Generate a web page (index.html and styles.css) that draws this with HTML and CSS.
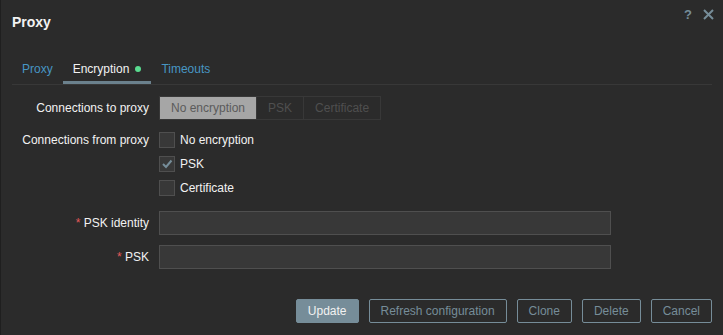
FILE: index.html
```html
<!doctype html>
<html>
  <head>
    <link rel="stylesheet" href="styles.css">
    <title>Proxy</title>
  </head>
  <body>
    <div id="dialog">
      <div class="dialog-header">
        <h4>Proxy</h4>
        <div class="header-controls">
          <span class="help-btn">?</span>
          <svg class="close-btn" width="11" height="11" viewBox="0 0 11 11">
            <path d="M1 1 L10 10 M10 1 L1 10" stroke="#768d99" stroke-width="2"/>
          </svg>
        </div>
      </div>
      <ul class="tabs">
        <li class="tab"><a>Proxy</a></li>
        <li class="tab active"><a>Encryption</a><span class="status-dot"></span></li>
        <li class="tab"><a>Timeouts</a></li>
      </ul>
      <div class="dialog-body">
        <div class="form-row row-to">
          <label class="label">Connections to proxy</label>
          <div class="radio-list">
            <span class="segment selected">No encryption</span>
            <span class="segment">PSK</span>
            <span class="segment">Certificate</span>
          </div>
        </div>
        <div class="form-row row-from">
          <label class="label">Connections from proxy</label>
          <ul class="checkbox-list">
            <li class="checkbox-item"><span class="checkbox"></span>No encryption</li>
            <li class="checkbox-item">
              <span class="checkbox">
                <svg width="14" height="14" viewBox="0 0 14 14"><path d="M3 7 L6 10 L11.5 3.5" stroke="#768d99" stroke-width="2" fill="none"/></svg>
              </span>PSK
            </li>
            <li class="checkbox-item"><span class="checkbox"></span>Certificate</li>
          </ul>
        </div>
        <div class="form-row row-identity">
          <label class="label"><span class="required">*</span> PSK identity</label>
          <input type="text" class="text-input">
        </div>
        <div class="form-row">
          <label class="label"><span class="required">*</span> PSK</label>
          <input type="text" class="text-input">
        </div>
      </div>
      <div class="dialog-footer">
        <button class="btn primary">Update</button>
        <button class="btn">Refresh configuration</button>
        <button class="btn">Clone</button>
        <button class="btn">Delete</button>
        <button class="btn">Cancel</button>
      </div>
    </div>
  </body>
</html>
```
FILE: styles.css
```css
body {
  margin: 0;
  font-family: "Liberation Sans", Arial, sans-serif;
  font-size: 12px;
  color: #f2f2f2;
  background: #1f1f1f;
}

#dialog {
  box-sizing: border-box;
  width: 723px;
  height: 335px;
  border-left: 1px solid #1f1f1f;
  background: #2b2b2b;
  display: flex;
  flex-direction: column;
}

.dialog-header {
  height: 56px;
  box-sizing: border-box;
  padding: 14px 9px 0 11px;
  display: flex;
  justify-content: space-between;
  align-items: flex-start;
}

h4 {
  margin: 0;
  font-size: 14px;
  line-height: 16px;
  font-weight: bold;
}

.header-controls {
  display: flex;
  align-items: center;
  gap: 11px;
  margin-top: -7px;
}

.help-btn {
  color: #768d99;
  font-weight: bold;
  font-size: 13px;
}

.tabs {
  list-style: none;
  margin: 0 11px;
  padding: 0;
  display: flex;
  border-bottom: 1px solid #383838;
}

.tab {
  padding: 6px 10px 5px;
  line-height: 14px;
  border-bottom: 3px solid transparent;
  display: flex;
  align-items: center;
}

.tab a {
  color: #4796c4;
}

.tab.active {
  border-bottom-color: #6b818d;
}

.tab.active a {
  color: #f2f2f2;
}

.status-dot {
  width: 6px;
  height: 6px;
  border-radius: 50%;
  background: #59db8f;
  margin-left: 6px;
}

.dialog-body {
  flex: 1;
  padding: 11px 11px 0;
}

.form-row {
  display: grid;
  grid-template-columns: 137px 1fr;
  column-gap: 10px;
  margin-bottom: 10px;
}

.row-to {
  margin-bottom: 8px;
}

.row-from {
  margin-bottom: 11px;
}

.label {
  text-align: right;
  line-height: 24px;
  white-space: nowrap;
}

.required {
  color: #e45959;
}

.radio-list {
  display: flex;
  justify-self: start;
  border: 1px solid #383838;
  height: 22px;
}

.segment {
  line-height: 22px;
  padding: 0 11px;
  color: #4f4f4f;
  border-left: 1px solid #383838;
}

.segment:first-child {
  border-left: none;
}

.segment.selected {
  background: #a6a6a6;
  color: #5b5b5b;
}

.checkbox-list {
  list-style: none;
  margin: 0;
  padding: 0;
}

.checkbox-item {
  display: flex;
  align-items: center;
  height: 24px;
}

.checkbox {
  box-sizing: border-box;
  width: 16px;
  height: 16px;
  border: 1px solid #4f4f4f;
  background: #383838;
  margin-right: 5px;
  display: flex;
  align-items: center;
  justify-content: center;
}

.text-input {
  box-sizing: border-box;
  width: 452px;
  height: 24px;
  background: #383838;
  border: 1px solid #4f4f4f;
  margin: 0;
}

.dialog-footer {
  display: flex;
  justify-content: flex-end;
  gap: 10px;
  padding: 0 11px 12px;
}

.btn {
  font-family: inherit;
  font-size: 12px;
  height: 24px;
  padding: 0 11px;
  background: transparent;
  color: #768d99;
  border: 1px solid #768d99;
  border-radius: 2px;
}

.btn.primary {
  background: #768d99;
  color: #f2f2f2;
}
```
